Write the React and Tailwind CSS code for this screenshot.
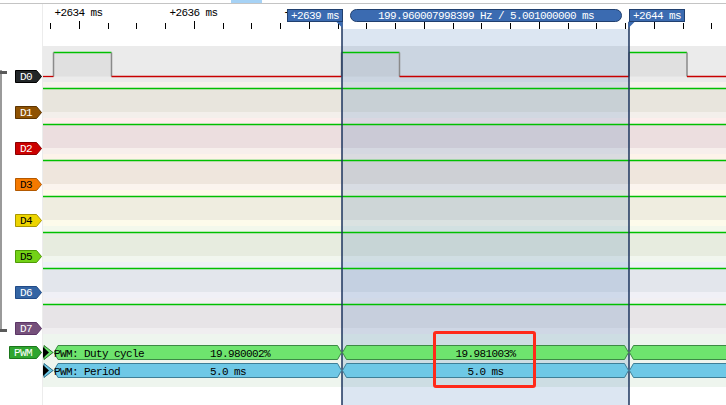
const channels = [
  { name: 'D0', fill: '#222628', stroke: '#000000', text: 'text-white', top: 'bg-[#ebebeb]', mid: 'bg-[#ebebeb]', bot: 'bg-[#ebebeb]' },
  { name: 'D1', fill: '#8f5202', stroke: '#5c3401', text: 'text-white', top: 'bg-[#f6f2ec]', mid: 'bg-[#e8e5dd]', bot: 'bg-[#f3efeb]' },
  { name: 'D2', fill: '#cc0000', stroke: '#8a0000', text: 'text-white', top: 'bg-[#fdeeec]', mid: 'bg-[#ecdedf]', bot: 'bg-[#f7efec]' },
  { name: 'D3', fill: '#f57900', stroke: '#b35900', text: 'text-black', top: 'bg-[#fdf3ea]', mid: 'bg-[#efe6dd]', bot: 'bg-[#fbf4ee]' },
  { name: 'D4', fill: '#edd400', stroke: '#a89600', text: 'text-black', top: 'bg-[#fffbe9]', mid: 'bg-[#efede0]', bot: 'bg-[#fdfbeb]' },
  { name: 'D5', fill: '#73d216', stroke: '#4e9a06', text: 'text-black', top: 'bg-[#f3f8ec]', mid: 'bg-[#e7ecdf]', bot: 'bg-[#f1f6ee]' },
  { name: 'D6', fill: '#3465a4', stroke: '#204a87', text: 'text-white', top: 'bg-[#eef1f6]', mid: 'bg-[#e3e6ec]', bot: 'bg-[#f0f0f6]' },
  { name: 'D7', fill: '#75507b', stroke: '#5c3566', text: 'text-white', top: 'bg-[#f2f0f3]', mid: 'bg-[#e7e4e7]', bot: 'bg-[#f0eef0]' },
];

const rulerLabels = ['+2634 ms', '+2636 ms', '+2638 ms', '+2640 ms', '+2642 ms', '+2644 ms'];

const ticks = Array.from({ length: 24 }, (_, k) => ({
  x: Math.round(50 + 28.75 * k) + 0.5,
  major: k % 4 === 1,
}));

// annotation shape, coordinates local to the decoder strip (x - 43, y - 334)
const hex = (x1, x2, top, bot) => {
  const m = (top + bot) / 2;
  return `${x1},${m} ${x1 + 4},${top} ${x2 - 4},${top} ${x2},${m} ${x2 - 4},${bot} ${x1 + 4},${bot}`;
};

const spans = [[11, 298.5], [299.5, 585.5], [586.5, 700]];

const decoderRows = [
  { label: 'PWM: Duty cycle', first: '19.980002%', second: '19.981003%', fill: '#6ee46e', stroke: '#3d8a45', tip: '#2f7a2f', top: 11.5 },
  { label: 'PWM: Period', first: '5.0 ms', second: '5.0 ms', fill: '#6ec8e6', stroke: '#3e7f97', tip: '#2f6f8a', top: 29.5 },
];

function ChannelTag({ ch }) {
  return (
    <div className="relative w-[27px] h-[13px]">
      <svg className="absolute inset-0" width="27" height="13">
        <polygon points="0.5,0.5 21.5,0.5 26.5,6.5 21.5,12.5 0.5,12.5" fill={ch.fill} stroke={ch.stroke} />
      </svg>
      <div className={`relative flex h-[13px] w-[22px] items-center justify-center ${ch.text}`}>{ch.name}</div>
    </div>
  );
}

function Waveforms() {
  const pulses = [[53.5, 111.5], [341.5, 399.5], [629, 687]];
  const lows = [[43, 53.5], [111.5, 341.5], [399.5, 629], [687, 726]];
  return (
    <svg className="absolute inset-0 pointer-events-none" width="726" height="405">
      {ticks.map((t, i) => (
        <line key={i} x1={t.x} x2={t.x} y1={t.major ? 21 : 23} y2={29} stroke="#000" strokeWidth="1" />
      ))}

      {pulses.map(([a, b], i) => (
        <g key={i}>
          <rect x={a} y={52.5} width={b - a} height={24} fill="rgba(128,128,128,0.1)" />
          <line x1={a} x2={b} y1={52.5} y2={52.5} stroke="#00c000" strokeWidth="1.3" />
          <line x1={a} x2={a} y1={52.5} y2={76.5} stroke="#8a8a8a" strokeWidth="1.5" />
          <line x1={b} x2={b} y1={52.5} y2={76.5} stroke="#8a8a8a" strokeWidth="1.5" />
        </g>
      ))}
      {lows.map(([a, b], i) => (
        <line key={i} x1={a} x2={b} y1={76.5} y2={76.5} stroke="#c80000" strokeWidth="1.3" />
      ))}

      {[88, 124, 160, 196, 232, 268, 304].map((y) => (
        <line key={y} x1={43} x2={726} y1={y + 0.5} y2={y + 0.5} stroke="#00c000" strokeWidth="1.3" />
      ))}

      <line x1={342} x2={342} y1={22} y2={405} stroke="#1c355e" strokeWidth="1.5" />
      <line x1={629} x2={629} y1={22} y2={405} stroke="#1c355e" strokeWidth="1.5" />
      <polygon points="336,21.5 342.5,21.5 342.5,28" fill="#3b6bb1" />
      <polygon points="628.5,21.5 635,21.5 628.5,28" fill="#3b6bb1" />
    </svg>
  );
}

function DecoderStrip() {
  return (
    <div className="h-[53px] bg-[#eef5ee] relative">
      <div className="absolute inset-0 z-10">
        <svg className="absolute inset-0" width="683" height="53">
          {decoderRows.map((r) => (
            <g key={r.label}>
              {spans.map(([a, b], i) => (
                <polygon key={i} points={hex(a, b, r.top, r.top + 14)} fill={r.fill} stroke={r.stroke} />
              ))}
              <polygon points={`1,${r.top} 10,${r.top + 7} 1,${r.top + 14}`} fill={r.fill} stroke={r.tip} />
              <polygon points={`0,${r.top + 1.5} 6,${r.top + 7} 0,${r.top + 12.5}`} fill="#000" />
            </g>
          ))}
        </svg>
        <div className="relative flex flex-col gap-[3px] pt-[12px]">
          {decoderRows.map((r) => (
            <div key={r.label} className="flex h-[15px] items-center whitespace-nowrap">
              <span className="w-[167px] pl-[11px]">{r.label}</span>
              <span className="w-[132px]">{r.first}</span>
              <span className="w-[287px] text-center">{r.second}</span>
            </div>
          ))}
        </div>
      </div>
    </div>
  );
}

export default function App() {
  return (
    <div className="relative w-[726px] h-[405px] overflow-hidden bg-white flex flex-col font-['Liberation_Mono','DejaVu_Sans_Mono',monospace] text-[11px] tracking-[-0.6px] leading-[12px] text-black">
      <div className="h-[3px] flex">
        <div className="ml-[231px] w-[31px] bg-[#a6d2f5]" />
      </div>
      <div className="h-px bg-[#c4c4c4]" />

      <div className="flex flex-1">
        {/* channel headers */}
        <div className="relative w-[43px] border-r border-[#ececec] flex flex-col">
          <div className="h-[42px]" />
          {channels.map((ch) => (
            <div key={ch.name} className="h-[36px] pt-[24px] pl-[15px]">
              <ChannelTag ch={ch} />
            </div>
          ))}
          <div className="h-[53px] pt-[12px] pl-[9px]">
            <div className="relative w-[33px] h-[13px]">
              <svg className="absolute inset-0" width="33" height="13">
                <polygon points="0.5,0.5 27.5,0.5 32.5,6.5 27.5,12.5 0.5,12.5" fill="#2fa52f" stroke="#1b761b" />
              </svg>
              <div className="relative flex h-[13px] w-[28px] items-center justify-center text-white">PWM</div>
            </div>
          </div>
          {/* group bracket */}
          <div className="absolute left-0 top-[66px] w-[2px] h-[262px] bg-[#9a9a9a]" />
          <div className="absolute left-0 top-[67px] w-[7px] h-[3px] bg-[#5a5a5a]" />
          <div className="absolute left-0 top-[325px] w-[7px] h-[3px] bg-[#5a5a5a]" />
        </div>

        {/* trace area */}
        <div className="flex-1 flex flex-col">
          <div className="h-[42px] bg-white pt-[3px] flex -ml-[22px]">
            {rulerLabels.map((l) => (
              <div key={l} className="w-[115px] shrink-0 text-center whitespace-nowrap">
                {l}
              </div>
            ))}
          </div>
          {channels.map((ch) => (
            <div key={ch.name} className="h-[36px] flex flex-col">
              <div className={`h-[6px] ${ch.top}`} />
              <div className={`h-[24px] ${ch.mid}`} />
              <div className={`h-[6px] ${ch.bot}`} />
            </div>
          ))}
          <DecoderStrip />
          <div className="flex-1 bg-white" />
        </div>
      </div>

      {/* selected range between cursors */}
      <div className="absolute left-[342px] top-[29px] w-[287px] bottom-0 bg-[rgba(22,88,168,0.15)]" />

      <Waveforms />

      {/* cursor markers */}
      <div className="absolute left-[287px] top-[9px] w-[56px] h-[13px] bg-[#3b6bb1] border border-[#21406f] text-white flex items-center justify-center whitespace-nowrap">
        +2639 ms
      </div>
      <div className="absolute left-[629px] top-[9px] w-[56px] h-[13px] bg-[#3b6bb1] border border-[#21406f] text-white flex items-center justify-center whitespace-nowrap">
        +2644 ms
      </div>
      <div className="absolute left-[350px] top-[9px] w-[272px] h-[13px] rounded-full bg-[#3b6bb1] border border-[#21406f] text-white flex items-center justify-center whitespace-nowrap">
        199.960007998399 Hz / 5.001000000 ms
      </div>

      {/* highlight box */}
      <div className="absolute left-[433px] top-[331px] w-[103px] h-[57px] border-[3px] border-[#ff2a1a] rounded-[3px] z-20" />
    </div>
  );
}
